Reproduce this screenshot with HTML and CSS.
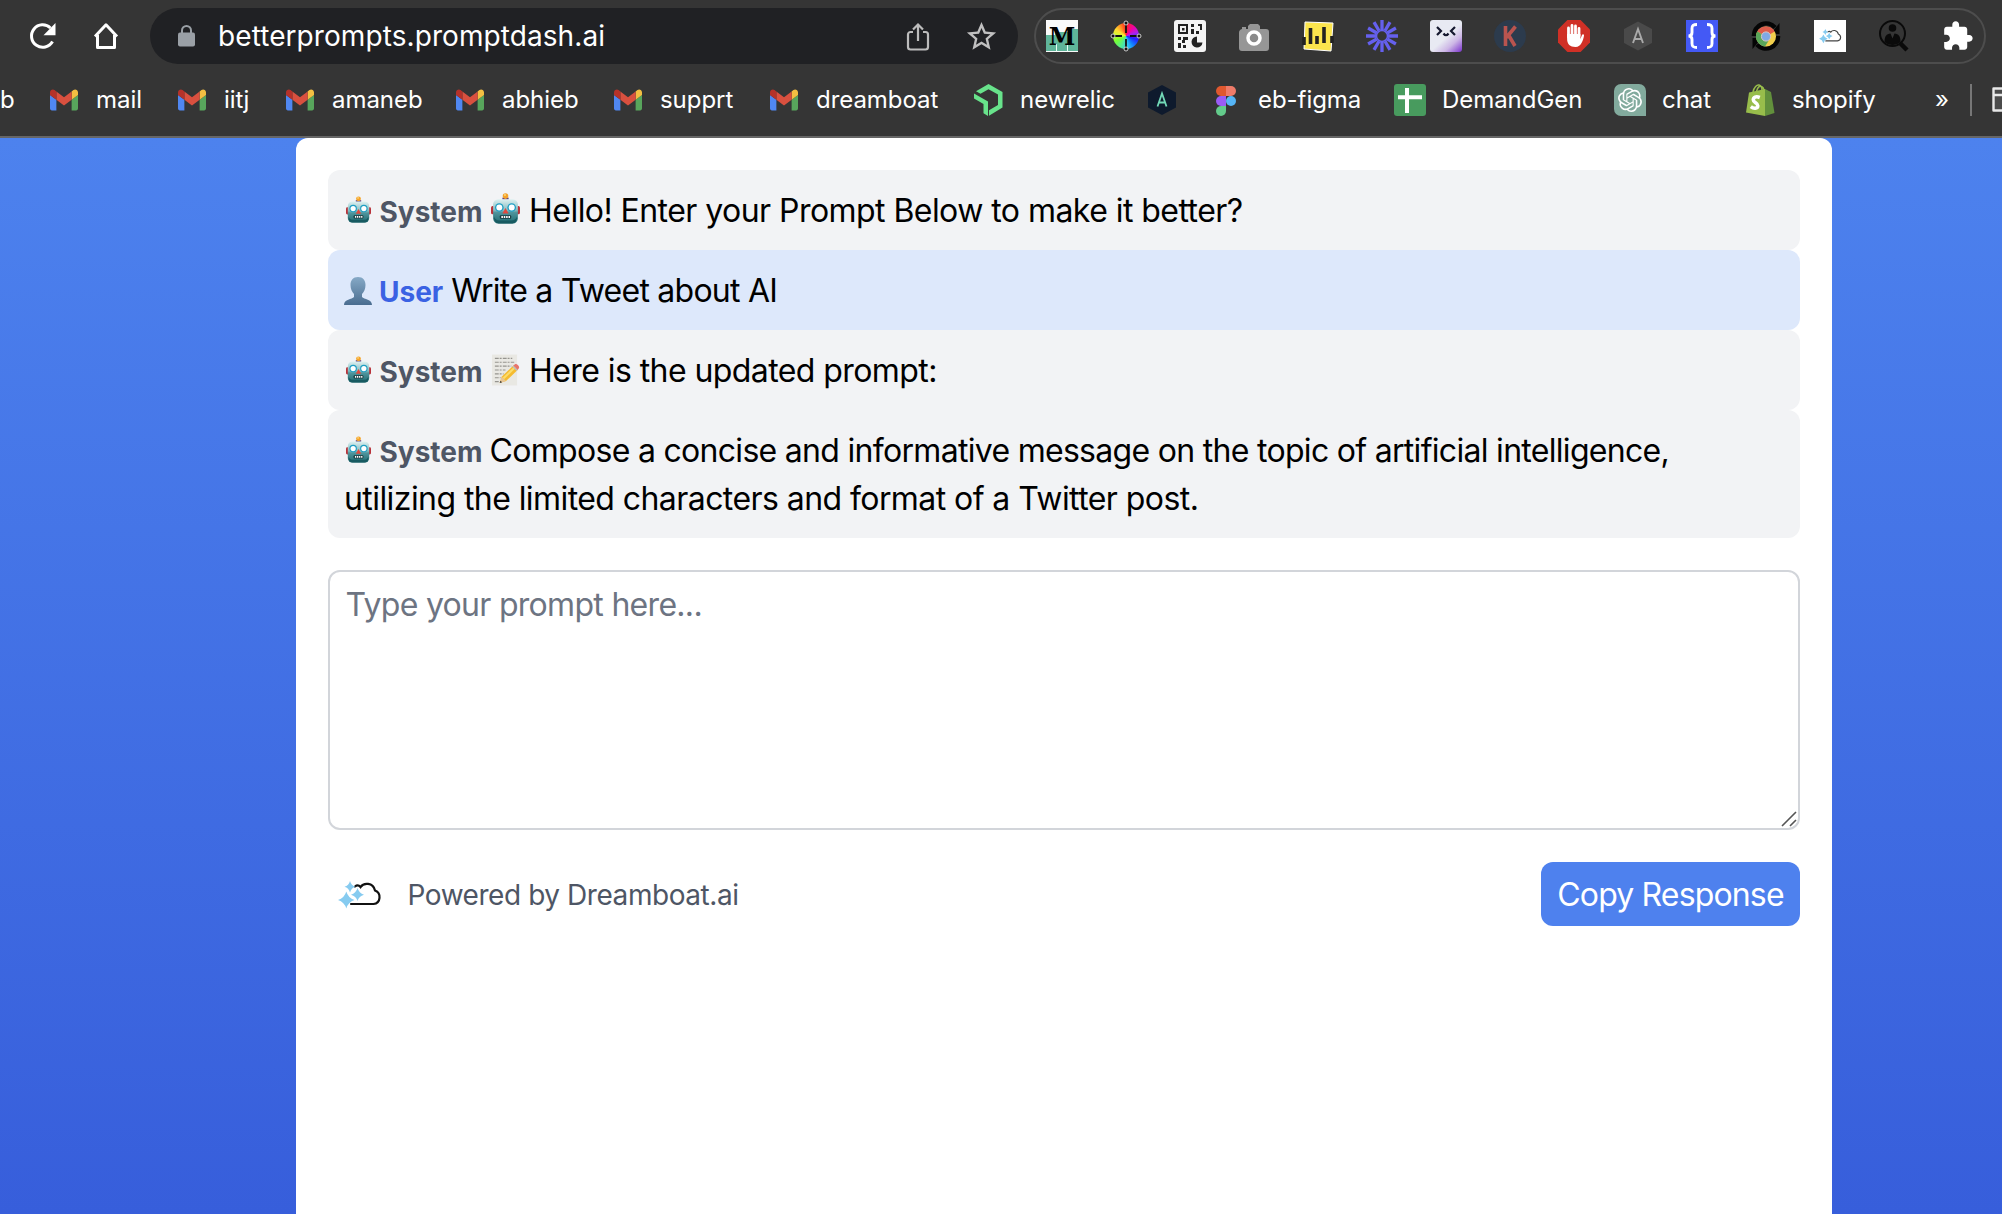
FILE: index.html
```html
<!DOCTYPE html>
<html lang="en">
<head>
<meta charset="utf-8">
<title>Better Prompts</title>
<link rel="stylesheet" href="styles.css">
</head>
<body>
<svg class="defs" aria-hidden="true">
  <defs>
    <linearGradient id="face" x1="0" y1="0" x2="0" y2="1"><stop offset="0" stop-color="#dff1f1"/><stop offset=".45" stop-color="#86bcc0"/><stop offset=".55" stop-color="#4f949c"/><stop offset="1" stop-color="#1f6a70"/></linearGradient>
    <linearGradient id="bust" x1="0" y1="0" x2="0" y2="1"><stop offset="0" stop-color="#86a9c6"/><stop offset="1" stop-color="#4a6d90"/></linearGradient>
    <linearGradient id="lilac" x1=".1" y1="0" x2="1" y2="1"><stop offset=".5" stop-color="#e8eaf3"/><stop offset=".72" stop-color="#cdb7e6"/><stop offset="1" stop-color="#7a32cc"/></linearGradient>
    <symbol id="gmail" viewBox="52 42 88 66">
      <path fill="#5087f1" d="M58 108h14V74L52 59v43c0 3.32 2.69 6 6 6"/><path fill="#58a55c" d="M120 108h14c3.32 0 6-2.69 6-6V59l-20 15"/><path fill="#f3bf42" d="M120 48v26l20-15v-8c0-7.42-8.47-11.65-14.4-7.2"/><path fill="#d9503f" d="M72 74V48l24 18 24-18v26L96 92"/><path fill="#b5322a" d="M52 51v8l20 15V48l-5.6-4.2c-5.94-4.45-14.4-.22-14.4 7.2"/>
    </symbol>
    <symbol id="robot" viewBox="0 0 28 30">
      <rect x="0" y="12.5" width="4" height="8" rx="1.5" fill="#b8323a"/><rect x="24" y="12.5" width="4" height="8" rx="1.5" fill="#b8323a"/>
      <path d="M11 6.5h6v-2h-6z" fill="#5a3f86"/><circle cx="14" cy="3" r="2.7" fill="#f5a32a"/><circle cx="13.5" cy="2" r="1" fill="#fbd57a"/>
      <rect x="2" y="6" width="24" height="23.5" rx="5" fill="url(#face)"/><path d="M3 23v2a4.500 4.500 0 0 0 4.500 4.500h13a4.500 4.500 0 0 0 4.500-4.500v-2c-1 2.500-2.500 3.500-5 3.500H8c-2.500 0-4-1-5-3.500z" fill="#175a61"/>
      <circle cx="8" cy="14" r="4.200" fill="#1f9fc4"/><circle cx="20" cy="14" r="4.200" fill="#1f9fc4"/><circle cx="8" cy="14" r="2.900" fill="#fff"/><circle cx="20" cy="14" r="2.900" fill="#fff"/>
      <path d="M14 14.500l3 5.300h-6z" fill="#e2483d"/><rect x="8.500" y="21.500" width="11" height="3.500" rx="1" fill="#17393d"/><path d="M10 22.300h1.500v2H10zM12.300 22.300h1.500v2h-1.500zM14.600 22.300h1.500v2h-1.500zM16.900 22.300h1.500v2h-1.500z" fill="#fff"/>
    </symbol>
    <symbol id="dream" viewBox="0 0 44 28">
      <path d="M17 5.500c2-1.600 4-1.200 5.500.6C25.500 1.500 35 1.200 37 9.500c6.500 2.500 6 12.500-1.500 13.500H13" fill="none" stroke="var(--ln,#111)" stroke-width="2.200" stroke-linecap="round"/>
      <path d="M12 0q1.200 4.600 5.500 5.800Q13.200 7 12 11.500 10.800 7 6.500 5.800 10.800 4.600 12 0zM19.500 7q1.500 5.300 6.500 6.700-5 1.400-6.500 6.300-1.500-4.900-6.500-6.300 5-1.400 6.500-6.700zM8.300 10.500q1.900 6.500 8.200 8.500-6.300 2-8.200 8.500Q6.400 21 0 19q6.400-2 8.300-8.500z" fill="#86cbf0"/>
    </symbol>
  </defs>
</svg>

<header class="chrome">
  <div class="toolbar">
    <svg class="nav reload" viewBox="0 0 32 32"><path d="M26.500 21.500A11.200 11.200 0 1 1 24.500 8" fill="none" stroke="#fff" stroke-width="3"/><path d="M29.500 3v12.300H17.500z" fill="#fff"/></svg>
    <svg class="nav" viewBox="0 0 32 32"><path d="M5 16.500L16 4.800 27 16.500M7.500 15v12.500h17V15" fill="none" stroke="#fff" stroke-width="3" stroke-linejoin="round"/></svg>
    <div class="omnibox">
      <svg class="lock" viewBox="0 0 17 22"><rect x="0" y="7.500" width="17" height="14" rx="2" fill="#9aa0a6"/><path d="M4 9V5.500a4.500 4.500 0 0 1 9 0V9" fill="none" stroke="#9aa0a6" stroke-width="2"/></svg>
      <span class="url">betterprompts.promptdash.ai</span>
      <svg class="share" viewBox="0 0 24 30"><path d="M7 10H4.500A2.500 2.500 0 0 0 2 12.500V25a2.500 2.500 0 0 0 2.500 2.500h15A2.500 2.500 0 0 0 22 25V12.500a2.500 2.500 0 0 0-2.500-2.500H17M12 19V3M7 7.500l5-5 5 5" fill="none" stroke="#bcbcbc" stroke-width="2.200"/></svg>
      <svg class="star" viewBox="0 0 24 24"><path fill="#c0c0c0" d="M22 9.240l-7.190-.62L12 2 9.190 8.630 2 9.240l5.460 4.730L5.820 21 12 17.270 18.180 21l-1.630-7.030L22 9.240zM12 15.400l-3.760 2.270 1-4.280-3.320-2.880 4.380-.38L12 6.100l1.710 4.040 4.380.38-3.320 2.880 1 4.280L12 15.400z"/></svg>
    </div>
    <div class="extensions">
      <svg viewBox="0 0 32 32"><path fill="#fafafa" d="M0 0h32v32H0z"/><path fill="#5fb59a" d="M0 15h9v-3h13V9h10v22H0z"/><path d="M10.500 24v8M21.500 24v8" stroke="#e8fff5"/><text x="16" y="25" class="slab">M</text></svg>
      <div class="wheel"><svg viewBox="0 0 32 32"><path d="M16 4v9M16 19v9M4 16h8M20 16h8" stroke="#111" stroke-width="1.800"/><g fill="#111" stroke="#ddd" stroke-width=".9"><circle cx="16" cy="3" r="2"/><circle cx="16" cy="29" r="2"/><circle cx="3" cy="16" r="2"/><circle cx="29" cy="16" r="2"/></g></svg></div>
      <svg viewBox="0 0 32 32"><rect width="32" height="32" rx="3" fill="#f4f4f4"/><path d="M5 5h8v8H5z" fill="none" stroke="#222" stroke-width="2"/><path d="M8 8h2.500v2.500H8zM17 4h3v3h-3zM17 9h3v5h-3zM24 4h4v6h-2V6h-2zM22 11h3v3h-3zM4 17h3v3H4zM9 17h5v3h-3v3H8v-3h1zM4 23h3v5H4zM9 25h3v3H9z" fill="#222"/><path d="M23 16.500a5.500 5.500 0 1 0 5.500 6H23z" fill="#222"/></svg>
      <svg viewBox="0 0 32 32"><path d="M1 13a4 4 0 0 1 3-4V7h4v2h2V6l2-2h8l2 2v3h6a3 3 0 0 1 3 3v16a3 3 0 0 1-3 3H4a3 3 0 0 1-3-3z" fill="#969696"/><circle cx="16" cy="18" r="6" fill="#8a8a8a" stroke="#fff" stroke-width="3.500"/></svg>
      <svg viewBox="0 0 32 32"><path d="M3 2l28 1-2 28-27-2z" fill="#fbe54d" stroke="#fff"/><path d="M2 17v8M8.500 8v16M15 16v8M22 7v16M30 16v7" stroke="#222" stroke-width="3.600"/></svg>
      <svg viewBox="0 0 32 32"><g stroke="#6560ee" stroke-width="3.300"><path d="M16 0v10M16 22v10M0 16h10M22 16h10M8 2.100l5 8.700M19 21.200l5 8.700M2.100 8l8.700 5M21.200 19l8.700 5M2.100 24l8.700-5M21.200 13l8.700-5M8 29.900l5-8.700M19 10.800l5-8.700"/></g><circle cx="16" cy="16" r="5.500" fill="none" stroke="#6560ee" stroke-width="1.500"/></svg>
      <svg viewBox="0 0 32 32"><rect width="32" height="32" rx="3" fill="url(#lilac)"/><path d="M7 7l4 4-4 4M25 7l-4 4 4 4M13.500 13.500q2.500 3.500 5 0" fill="none" stroke="#15182f" stroke-width="2.200"/></svg>
      <svg viewBox="0 0 32 32"><circle cx="16" cy="16" r="16" fill="#2c3b4d"/><path d="M11.500 6v20M21.500 6.500l-9 11M14.500 15l6.500 11" fill="none" stroke="#b9544f" stroke-width="3.600"/></svg>
      <svg viewBox="0 0 32 32"><path d="M9.400 0h13.200L32 9.400v13.200L22.600 32H9.400L0 22.600V9.400z" fill="#d03026"/><path d="M10.500 17V8M14 15V5.500M17.500 15V6M21 16V8.500" stroke="#fff" stroke-width="2.800" stroke-linecap="round"/><path d="M9.100 14h13.300v5l1.600-4c.5-1.200 2.300-.8 2 .8-.8 4-2.500 11.200-8.500 11.200-5.500 0-8.400-3-8.400-8z" fill="#fff"/></svg>
      <svg viewBox="0 0 32 32"><path d="M16 1.500l14 7.500v14l-14 7.500L2 23V9z" fill="#4a4a4a"/><path d="M11 23l5-14 5 14M12.500 19h7" fill="none" stroke="#aaa" stroke-width="1.900"/></svg>
      <svg viewBox="0 0 32 32"><path fill="#4459f5" d="M0 0h32v32H0z"/><path d="M11 4.500c-4 0-5 1-5 4v4c0 2.500-1 3.500-3.500 3.500C5 16 6 17 6 19.500v4c0 3 1 4 5 4M21 4.500c4 0 5 1 5 4v4c0 2.500 1 3.500 3.500 3.500-2.500 0-3.500 1-3.500 3.500v4c0 3-1 4-5 4" fill="none" stroke="#fff" stroke-width="2.900"/></svg>
      <svg viewBox="0 0 32 32"><path d="M4 16A12 12 0 0 1 25 7.500M28 16A12 12 0 0 1 7 24.500" fill="none" stroke="#050505" stroke-width="4.500"/><path d="M29.500 3v11h-9zM2.500 29V18h9z" fill="#050505"/><circle cx="16" cy="16.500" r="10" fill="#f1ce4b"/><path d="M16 16.500L7.300 11.500a10 10 0 0 1 17.400 0z" fill="#dd5c4b"/><path d="M7.300 11.500a10 10 0 0 0 7.700 15l5-8-4-2z" fill="#59a65a"/><circle cx="16" cy="16.500" r="4.600" fill="#7fa9e6" stroke="#d9c7c4"/></svg>
      <svg viewBox="0 0 32 32" class="mini"><path fill="#fff" d="M0 0h32v32H0z"/><use href="#dream" x="5" y="9" width="23" height="14.500"/></svg>
      <svg viewBox="0 0 32 32"><circle cx="14.500" cy="13.500" r="12.500" fill="none" stroke="#0a0a0a" stroke-width="2"/><circle cx="14.500" cy="8" r="3.800" fill="#0a0a0a"/><path d="M6.500 22c0-6 2-8 6-8.500l2 5 2-5c4 .5 6 2.500 6 8.500-4 4-12 4-16 0z" fill="#0a0a0a"/><path d="M22 23l7 7" stroke="#0a0a0a" stroke-width="4.500"/></svg>
      <svg viewBox="0.400 0 23.600 23.600"><path fill="#fff" d="M20.500 11H19V7c0-1.100-.9-2-2-2h-4V3.500C13 2.120 11.880 1 10.500 1S8 2.120 8 3.500V5H4c-1.100 0-1.990.9-1.990 2v3.800H3.500c1.490 0 2.700 1.210 2.700 2.700s-1.210 2.700-2.700 2.700H2V20c0 1.100.9 2 2 2h3.800v-1.500c0-1.490 1.210-2.700 2.700-2.700 1.490 0 2.700 1.210 2.700 2.700V22H17c1.100 0 2-.9 2-2v-4h1.500c1.380 0 2.500-1.120 2.500-2.500S21.880 11 20.500 11z"/></svg>
    </div>
  </div>

  <nav class="bookmarks">
    <span class="bm"><span>b</span></span>
    <span class="bm"><svg class="gm"><use href="#gmail"/></svg><span>mail</span></span>
    <span class="bm"><svg class="gm"><use href="#gmail"/></svg><span>iitj</span></span>
    <span class="bm"><svg class="gm"><use href="#gmail"/></svg><span>amaneb</span></span>
    <span class="bm"><svg class="gm"><use href="#gmail"/></svg><span>abhieb</span></span>
    <span class="bm"><svg class="gm"><use href="#gmail"/></svg><span>supprt</span></span>
    <span class="bm"><svg class="gm"><use href="#gmail"/></svg><span>dreamboat</span></span>
    <span class="bm"><svg viewBox="0 0 32 32"><path d="M16.500 0L30.500 8v15.500L17 31.800v-5.500l9-5.300V10.500L16.500 5.200 8.500 9.800 4 7.200z" fill="#68e38b"/><path d="M2 9.500l14 8V32l-4.500-2.700V20L2 14.500z" fill="#68e38b"/></svg><span>newrelic</span></span>
    <span class="bm"><svg viewBox="0 0 32 32"><path d="M16 1l14 7.500v15L16 31 2 23.500v-15z" fill="#0e1a2d"/><path d="M11.500 22.500l4.500-13 4.500 13M13 18.500h6" fill="none" stroke="#72d9b8" stroke-width="1.800"/></svg></span>
    <span class="bm"><svg viewBox="0 0 32 32"><path d="M11 2h5v10h-5a5 5 0 0 1 0-10z" fill="#e0582f"/><path d="M16 2h5a5 5 0 0 1 0 10h-5z" fill="#ee7b69"/><path d="M11 12h5v10h-5a5 5 0 0 1 0-10z" fill="#9a5cf5"/><circle cx="21" cy="17" r="5" fill="#55b5f6"/><path d="M11 22h5v5a5 5 0 1 1-5-5z" fill="#63cb8b"/></svg><span>eb-figma</span></span>
    <span class="bm"><svg viewBox="0 0 32 32"><rect width="32" height="32" rx="3" fill="#489b5e"/><path d="M4 13.200h24M13 4v25" stroke="#fff" stroke-width="4"/></svg><span>DemandGen</span></span>
    <span class="bm"><svg viewBox="0 0 32 32"><path d="M7 0h18a7 7 0 0 1 7 7v25H7a7 7 0 0 1-7-7V7a7 7 0 0 1 7-7z" fill="#82aa9d"/><path transform="translate(4 4)" fill="#fff" d="M22.282 9.821a5.985 5.985 0 0 0-.516-4.911 6.046 6.046 0 0 0-6.510-2.900A6.065 6.065 0 0 0 4.981 4.182a5.985 5.985 0 0 0-3.998 2.900 6.046 6.046 0 0 0 .743 7.097 5.980 5.980 0 0 0 .511 4.911 6.051 6.051 0 0 0 6.515 2.900A5.985 5.985 0 0 0 13.260 24a6.056 6.056 0 0 0 5.772-4.206 5.989 5.989 0 0 0 3.998-2.900 6.056 6.056 0 0 0-.748-7.073zm-9.022 12.608a4.476 4.476 0 0 1-2.876-1.041l.142-.080 4.778-2.758a.795.795 0 0 0 .393-.681v-6.737l2.020 1.169a.071.071 0 0 1 .038.052v5.583a4.504 4.504 0 0 1-4.495 4.494zm-9.661-4.125a4.471 4.471 0 0 1-.535-3.014l.142.085 4.783 2.758a.771.771 0 0 0 .781 0l5.843-3.369v2.332a.080.080 0 0 1-.033.062L9.740 19.950a4.499 4.499 0 0 1-6.141-1.646zM2.341 7.896a4.485 4.485 0 0 1 2.366-1.973V11.600a.766.766 0 0 0 .388.677l5.814 3.354-2.020 1.169a.076.076 0 0 1-.071 0l-4.830-2.787A4.504 4.504 0 0 1 2.341 7.872zm16.596 3.856L13.104 8.364 15.119 7.200a.076.076 0 0 1 .071 0l4.830 2.791a4.494 4.494 0 0 1-.677 8.104v-5.677a.790.790 0 0 0-.407-.667zm2.011-3.023l-.142-.085-4.774-2.782a.776.776 0 0 0-.785 0L9.409 9.230V6.897a.066.066 0 0 1 .028-.062l4.830-2.787a4.499 4.499 0 0 1 6.680 4.660zM8.307 12.863l-2.020-1.164a.080.080 0 0 1-.038-.057V6.074a4.499 4.499 0 0 1 7.376-3.454l-.142.081L8.704 5.459a.795.795 0 0 0-.393.681zm1.098-2.365l2.602-1.500 2.607 1.500v2.999l-2.597 1.500-2.607-1.500Z"/></svg><span>chat</span></span>
    <span class="bm"><svg viewBox="0 0 32 32"><path d="M5 8.500l16-3.500V32L2 28.500z" fill="#98bd4b"/><path d="M21 5l6 3 3.500 21L21 32z" fill="#62903c"/><path d="M9 8c1-5 4-7.500 6-7s3 3 3 5M12.500 7.500C13.500 3 16 1.500 17.500 2.500c2 .8 2.300 2.500 2.500 3.500" fill="none" stroke="#98bd4b" stroke-width="1.500"/><path d="M15.800 12.500c-4-1.600-6.500-.3-6.500 2.300 0 3 4.500 3 4.500 6 0 3.200-4.300 3-7 .9" fill="none" stroke="#fff" stroke-width="3.600" transform="translate(0 1)"/></svg><span>shopify</span></span>
    <span class="bm more"><span>»</span></span>
    <span class="divider"></span>
    <svg class="folder" viewBox="0 0 30 26"><path d="M1.500 1.500h26v22h-26zM1.500 8h26" fill="#4b4b4b" stroke="#e8e8e8" stroke-width="2.400" stroke-linejoin="round"/></svg>
  </nav>
</header>

<main class="page">
  <section class="card">
    <div class="messages">
      <div class="msg system"><span class="who"><svg class="em-s"><use href="#robot"/></svg>System</span><svg class="em-l"><use href="#robot"/></svg><span class="t1">Hello! Enter your Prompt Below to make it better?</span></div>
      <div class="msg user"><span class="who"><svg class="em-u" viewBox="0 0 28 28"><path d="M14 0c-5 0-7.500 3.500-7.500 8 0 4 1.500 7 3.500 9v3C8 22.500 0 22 0 28h28c0-6-8-5.500-10-8v-3c2-2 3.500-5 3.500-9 0-4.500-2.500-8-7.500-8z" fill="url(#bust)"/></svg>User</span><span class="t2">Write a Tweet about AI</span></div>
      <div class="msg system"><span class="who"><svg class="em-s"><use href="#robot"/></svg>System</span><svg class="em-n" viewBox="0 0 30 32"><path d="M1 0h26v32H1z" fill="#e9e8e3"/><path d="M4 4h18M4 8h20M4 12h17M4 16h11M4 20h9M4 24h6M4 28h5" stroke="#96948f" stroke-width="1.100" stroke-dasharray="4 1 2 1.200"/><path d="M9 29.500l2-6.500L23.500 11l4.500 4.500L15.500 27.500z" fill="#f5bb30"/><path d="M12 24L24.500 12l1.500 1.500L13.500 25.500z" fill="#fbdc6c"/><path d="M9 29.500l2-6.500 4.500 4.500z" fill="#e7c596"/><path d="M9 29.500l.8-2.500 1.700 1.700z" fill="#333"/><path d="M22 12.500l4.500 4.500 1.200-1.200-4.500-4.500z" fill="#b9bcc2"/><path d="M23.200 11.300l1.600-1.300c1.600-1 5 2 4.200 4l-1.300 1.800z" fill="#e8736b"/></svg><span class="t3">Here is the updated prompt:</span></div>
      <div class="msg system"><span class="who"><svg class="em-s"><use href="#robot"/></svg>System</span><span class="t4">Compose a concise and informative message on the topic of artificial intelligence,</span><br><span class="t5">utilizing the limited characters and format of a Twitter post.</span></div>
    </div>
    <div class="field">
      <textarea placeholder="Type your prompt here..."></textarea>
      <svg class="grip" viewBox="0 0 16 16"><path d="M1 15L15 1M9 15l6-6" stroke="#555" stroke-width="1.600"/></svg>
    </div>
    <footer class="actions">
      <div class="powered"><svg class="logo"><use href="#dream"/></svg><span>Powered by Dreamboat.ai</span></div>
      <button class="copy">Copy Response</button>
    </footer>
  </section>
</main>
</body>
</html>
```
FILE: styles.css
```css
* { box-sizing: border-box; }
body {
  margin: 0;
  height: 1214px;
  overflow: hidden;
  display: flex;
  flex-direction: column;
  font-family: Inter, "Liberation Sans", sans-serif;
  font-weight: 440;
  color: #000;
}
svg { flex: none; }
.defs { position: absolute; width: 0; height: 0; }

/* browser chrome */
.chrome {
  flex: none;
  height: 138px;
  background: #353535;
  border-bottom: 2px solid #666;
  color: #fff;
}
.toolbar {
  display: flex;
  align-items: center;
  height: 72px;
  padding-left: 26px;
}
.nav { width: 32px; height: 32px; margin-right: 32px; }
.omnibox {
  display: flex;
  align-items: center;
  width: 868px;
  height: 56px;
  margin-left: -4px;
  padding: 0 19px 0 28px;
  border-radius: 28px;
  background: #202124;
}
.lock { width: 17px; height: 22px; }
.url { flex: 1; margin-left: 23px; font-size: 28px; letter-spacing: .08px; line-height: 34px; }
.share { width: 24px; height: 30px; margin: 1px 34px 0 0; }
.star { width: 35px; height: 35px; }
.extensions {
  display: flex;
  align-items: center;
  gap: 32px;
  width: 952px;
  height: 56px;
  margin-left: 16px;
  padding-left: 10px;
  border: 2px solid #4d4d4d;
  border-radius: 28px;
}
.extensions svg { display: block; width: 32px; height: 32px; }
.slab { font: bold 24px "DejaVu Serif", serif; text-anchor: middle; }
.mini { --ln: #444; }
.wheel {
  flex: none;
  width: 32px;
  height: 32px;
  background: radial-gradient(circle, transparent 12.5px, #353535 13.5px), conic-gradient(#f22, #e0a 12%, #a2e 20%, #22f 30%, #18f 40%, #3ce 48%, #5e8 58%, #7f3 68%, #cf3 76%, #fd3 84%, #f82 92%, #f22);
}

.bookmarks {
  display: grid;
  grid-template-columns: 48px 128px 108px 170px 158px 156px 204px 174px 64px 184px 220px 130px 191px 35px 22px 10px;
  align-items: center;
  height: 56px;
  font-size: 24px;
  letter-spacing: -.05px;
}
.bm { display: flex; align-items: center; gap: 16px; white-space: nowrap; line-height: 30px; }
.bm svg { width: 32px; height: 32px; }
.bm .gm { width: 28px; height: 22px; margin: 0 2px; }
.bm span { margin-top: -1px; }
.divider { width: 2px; height: 32px; background: #777; }
.folder { width: 30px; height: 26px; }

/* page */
.page {
  flex: 1;
  display: flex;
  padding: 0 170px 0 296px;
  background: linear-gradient(#4d82ee, #375edb);
}
.card {
  flex: 1;
  padding: 32px;
  background: #fff;
  border-radius: 12px 12px 0 0;
}
.msg {
  padding: 17px 16px 15px;
  border-radius: 12px;
  font-size: 32px;
  line-height: 48px;
  white-space: nowrap;
}
.system { background: #f2f3f5; }
.user { background: #dde8fb; }
.who { font-size: 28px; line-height: 0; font-weight: 700; color: #4e5665; margin-right: 7px; }
.user .who { color: #3a62e3; margin-right: 8px; }
.msg svg { display: inline-block; }
.em-s { width: 25px; height: 27px; margin: 0 9px 0 1.500px; vertical-align: -1px; }
.em-u { width: 28px; height: 28px; margin: 0 7px 0 0; vertical-align: -3px; }
.em-l { width: 29px; height: 31px; margin: 0 9px 0 1.500px; vertical-align: -2px; }
.em-n { width: 29px; height: 32px; margin: 0 9px 0 1.500px; vertical-align: -4px; }
.t1 { letter-spacing: -.55px; }
.t2 { letter-spacing: -.75px; }
.t3 { letter-spacing: -.58px; }
.t4 { letter-spacing: -.7px; }
.t5 { letter-spacing: -.57px; }

.field { position: relative; margin-top: 32px; height: 260px; }
textarea {
  display: block;
  width: 100%;
  height: 100%;
  padding: 9px 15.500px 7px;
  border: 2px solid #d2d5da;
  border-radius: 12px;
  resize: none;
  font: 440 32px/48px Inter, "Liberation Sans", sans-serif;
  letter-spacing: -.7px;
}
textarea::placeholder { color: #6d7482; opacity: 1; }
.grip { position: absolute; right: 3px; bottom: 3px; width: 16px; height: 16px; }

.actions {
  display: flex;
  align-items: center;
  justify-content: space-between;
  margin-top: 32px;
}
.powered {
  display: flex;
  align-items: center;
  gap: 25.500px;
  padding: 1px 0 0 10px;
  font-size: 28px;
  letter-spacing: -.44px;
  color: #4e5665;
}
.logo { width: 44px; height: 28px; }
.copy {
  width: 259px;
  height: 64px;
  padding: 2px 0 0;
  border: 0;
  border-radius: 12px;
  background: #4e81ee;
  color: #fff;
  font: 440 32px/48px Inter, "Liberation Sans", sans-serif;
  letter-spacing: -.85px;
}
```
